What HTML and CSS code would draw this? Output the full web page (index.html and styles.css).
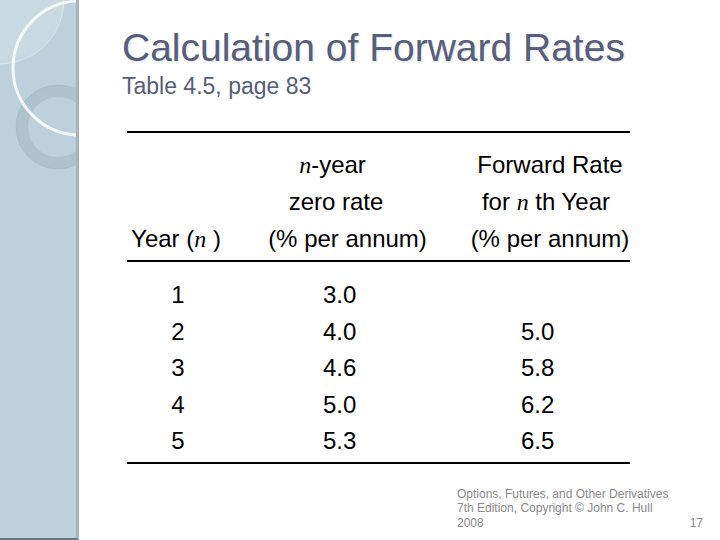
FILE: index.html
```html
<!DOCTYPE html>
<html>
<head>
<meta charset="utf-8">
<title>Calculation of Forward Rates</title>
<link rel="stylesheet" href="styles.css">
</head>
<body>
<div class="slide">
  <aside class="sidebar">
    <svg class="deco" width="76" height="540" viewBox="0 0 76 540" aria-hidden="true">
      <circle cx="0" cy="0" r="64" fill="#c8d9e2" stroke="#d6e4eb" stroke-width="1"/>
      <circle cx="58" cy="127" r="36" fill="none" stroke="rgba(100,122,138,0.15)" stroke-width="12"/>
      <circle cx="58" cy="127" r="42" fill="none" stroke="rgba(100,122,138,0.12)" stroke-width="1"/>
      <circle cx="80" cy="68" r="67" fill="none" stroke="rgba(255,255,255,0.85)" stroke-width="3"/>
    </svg>
  </aside>
  <main class="content">
    <h1 class="title">Calculation of Forward Rates</h1>
    <p class="subtitle">Table 4.5, page 83</p>
    <table class="rates">
      <colgroup>
        <col class="w1">
        <col class="w2">
        <col class="w3">
      </colgroup>
      <thead>
        <tr class="h1">
          <th class="c1"></th>
          <th class="c2 shift-a"><i class="var">n</i>-year</th>
          <th class="c3">Forward Rate</th>
        </tr>
        <tr class="h2">
          <th class="c1"></th>
          <th class="c2 shift-b">zero rate</th>
          <th class="c3 shift-c">for <i class="var">n</i> th Year</th>
        </tr>
        <tr class="h3">
          <th class="c1">Year (<i class="var">n</i> )</th>
          <th class="c2">(% per annum)</th>
          <th class="c3">(% per annum)</th>
        </tr>
      </thead>
      <tbody>
        <tr><td class="c1">1</td><td class="c2">3.0</td><td class="c3"></td></tr>
        <tr><td class="c1">2</td><td class="c2">4.0</td><td class="c3">5.0</td></tr>
        <tr><td class="c1">3</td><td class="c2">4.6</td><td class="c3">5.8</td></tr>
        <tr><td class="c1">4</td><td class="c2">5.0</td><td class="c3">6.2</td></tr>
        <tr><td class="c1">5</td><td class="c2">5.3</td><td class="c3">6.5</td></tr>
      </tbody>
    </table>
    <footer class="foot">
      <p class="credit">Options, Futures, and Other Derivatives 7th Edition, Copyright © John C. Hull 2008</p>
      <span class="page">17</span>
    </footer>
  </main>
</div>
</body>
</html>
```

FILE: styles.css
```css
html, body {
  margin: 0;
  padding: 0;
  background: #ffffff;
}

.slide {
  display: flex;
  width: 720px;
  height: 540px;
  overflow: hidden;
  font-family: "Liberation Sans", Arial, sans-serif;
}

.sidebar {
  flex: 0 0 76px;
  height: 538px;
  background: #bdd0db;
  border-left: 1px solid #6f8492;
  border-right: 3px solid #a3b4bf;
  border-bottom: 2px solid #64747f;
  margin-left: -1px;
  overflow: hidden;
}

.deco {
  display: block;
}

.content {
  flex: 1;
  padding: 26px 17px 0 43px;
  display: flex;
  flex-direction: column;
}

.title {
  margin: 0;
  font-weight: normal;
  font-size: 39px;
  line-height: 44px;
  color: #575e7b;
  text-shadow: 1px 1px 2px rgba(80, 90, 120, 0.18);
  white-space: nowrap;
}

.subtitle {
  margin: 3px 0 0;
  font-size: 23px;
  line-height: 26px;
  color: #575e7b;
}

.rates {
  margin: 32px 0 0 5px;
  width: 503px;
  border-collapse: separate;
  border-spacing: 0;
  font-size: 24px;
  color: #000;
  table-layout: fixed;
}

.rates .w1 { width: 98px; }
.rates .w2 { width: 245px; }
.rates .w3 { width: 160px; }

.rates th,
.rates td {
  box-sizing: border-box;
  padding: 0;
  font-weight: normal;
  white-space: nowrap;
}

.rates th {
  line-height: 37px;
  text-align: center;
}

.rates td {
  line-height: 36.5px;
  text-align: left;
}

.rates .h1 th {
  border-top: 2px solid #000;
  padding-top: 13px;
}

.rates .h3 th {
  border-bottom: 2px solid #000;
  padding-bottom: 3px;
}

.rates th.shift-a { padding-right: 30px; }
.rates th.shift-b { padding-right: 23px; }
.rates th.shift-c { padding-right: 8px; }

.rates td.c1 { text-align: center; padding-left: 4px; }
.rates td.c2 { padding-left: 98px; }
.rates td.c3 { padding-left: 51px; }

.rates tbody tr:first-child td { padding-top: 15px; }
.rates tbody tr:last-child td {
  padding-bottom: 2px;
  border-bottom: 2px solid #000;
}

.var {
  font-family: "Liberation Serif", "Times New Roman", serif;
  font-style: italic;
  line-height: 1;
}

.foot {
  display: flex;
  align-items: flex-end;
  margin-top: 23px;
  padding-left: 335px;
}

.credit {
  margin: 0;
  width: 216px;
  font-size: 12px;
  line-height: 14.5px;
  color: #8a8a8a;
}

.page {
  margin-left: auto;
  font-size: 12px;
  line-height: 14.5px;
  color: #8a8a8a;
}
```
